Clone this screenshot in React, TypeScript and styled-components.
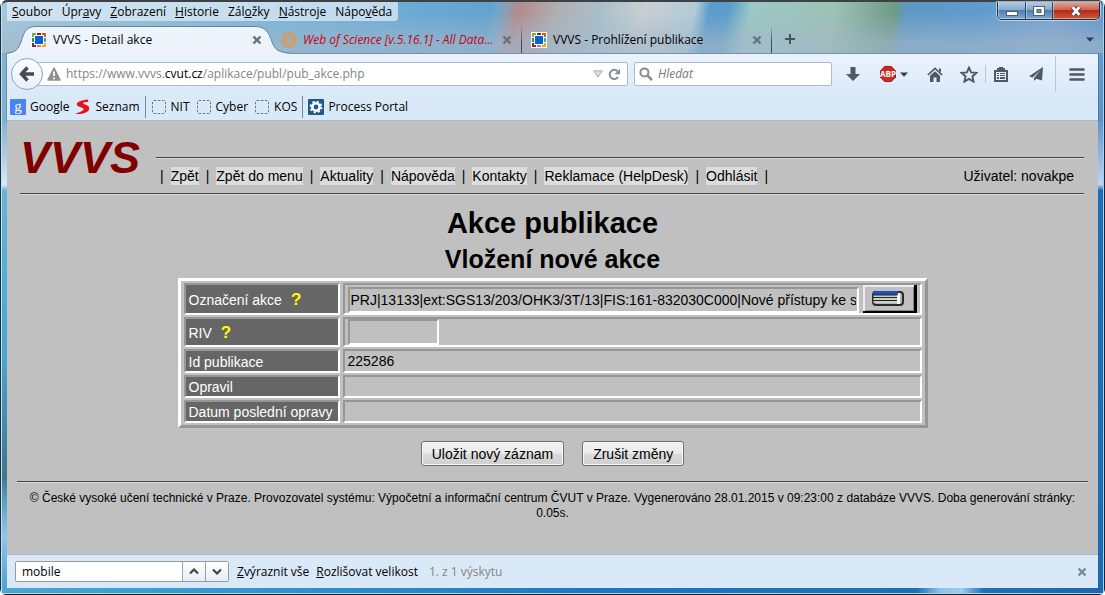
import React from "react";
import styled, { createGlobalStyle } from "styled-components";

const GlobalStyle = createGlobalStyle`
  *, *::before, *::after { box-sizing: border-box; }
  body { margin: 0; }
  button, input { margin: 0; padding: 0; border: 0; background: none; font: inherit; color: inherit; border-radius: 0; }
  svg { display: block; flex: none; }
`;

/* ---------- window ---------- */

const Frame = styled.div`
  position: relative;
  display: flex;
  flex-direction: column;
  min-height: 100vh;
  padding: 0 7px 7px;
  border-radius: 7px 7px 6px 6px;
  color: #000;
  font: 12px/16px "Open Sans", "Noto Sans", sans-serif;
  background:
    linear-gradient(to bottom, #3c4148 0 2px, transparent 2px),
    linear-gradient(to right, #14303f 0 1px, #c4e2f0 1px 2px, transparent 2px),
    linear-gradient(to left, #14263c 0 1px, #a9d0ee 1px 2px, transparent 2px),
    linear-gradient(to top, #15202c 0 1px, #a8d8ec 1px 2px, transparent 2px),
    linear-gradient(to right, #4ba6d4, #2a90cd 30%, #1f76bd 55%, #1d70b5 83%, #8ac0ea 85%, #9fcdf0 87%, #1f70b6 89%, #1d66ab) bottom / 100% 7px no-repeat,
    linear-gradient(to bottom, #86b6d4, #7fb0d0 20%, #aecbe6 26%, #dbe9f5 31%, #64b5dc 32%, #4ba5cf 60%, #41758f 80%, #5a9cc0 84%, #8fc7ec 90%, #4c9cca) left / 7px 100% no-repeat,
    linear-gradient(to bottom, #6fa0cd, #5b93c9 20%, #bed6ec 31%, #1a6db6 32%, #1c6cb2) right / 7px 100% no-repeat,
    #4b9bcb;
`;

const Glass = styled.header`
  display: flex;
  flex-direction: column;
  margin: 0 -5px;
  padding: 0 3px 0 5px;
  border-radius: 6px 6px 0 0;
  border-top: 2px solid #3c4148;
  background:
    linear-gradient(to bottom, rgba(160, 180, 200, 0) 10px, rgba(163, 183, 202, 0.65) 42px),
    linear-gradient(102deg, #a4c9de 0%, #8dc0dc 12%, #74b1d8 30%, #62a3d0 44%, #77a6c6 45%, #b28a8c 46.5%, #b0aeb0 50%, #a9c0cc 54%, #c8d0d2 58%, #b2cbd8 62.5%, #5a9ccb 63.8%, #5a9ccb 65.5%, #9bc8c4 67.5%, #9dc2b4 75%, #6d9a86 80.5%, #5e97c4 81.5%, #5f9bce 88%, #79a2cc 95%, #5d95c9 100%);
`;

const TitleRow = styled.div`
  display: flex;
  justify-content: space-between;
  align-items: flex-start;
  height: 23px;
`;

const MenuBar = styled.nav`
  display: flex;
  gap: 9px;
  height: 19px;
  padding: 0 6px 0 5px;
  border-radius: 0 0 4px 0;
  background: rgba(228, 238, 247, 0.7);
`;

const PlainButton = styled.button`
  line-height: 18px;
  white-space: nowrap;
`;

const WindowButtons = styled.div`
  display: flex;
  height: 18px;
  border: 1px solid #1f3146;
  border-top: 0;
  border-radius: 0 0 5px 5px;
  box-shadow: 0 0 0 1px rgba(230, 240, 250, 0.6);
  overflow: hidden;
`;

const WindowButton = styled.button<{ $width: number; $close?: boolean }>`
  display: grid;
  place-items: center;
  width: ${(p) => p.$width}px;
  border-right: ${(p) => (p.$close ? "0" : "1px solid #2b4560")};
  box-shadow: inset 1px -1px 0 rgba(255, 255, 255, 0.4);
  background: ${(p) =>
    p.$close
      ? "linear-gradient(#dfa79b, #cc6654 45%, #b32c17 50%, #cf5a38)"
      : "linear-gradient(#b4cde4, #84a9ce 45%, #4f7fb0 50%, #7fa8cf)"};
`;

/* ---------- tabs ---------- */

const TabRow = styled.div`
  display: flex;
  height: 28px;
  padding-left: 15px;
`;

const Tab = styled.div<{ $divided?: boolean }>`
  position: relative;
  display: flex;
  align-items: center;
  gap: 6px;
  width: 250px;
  padding: 2px 10px 0 9px;
  ${(p) =>
    p.$divided &&
    `background: linear-gradient(to bottom, transparent, #3d5060 60%) right / 1px 100% no-repeat;`}
`;

const TabShape = styled.svg`
  position: absolute;
  left: -15px;
  bottom: -1px;
`;

const TabTitle = styled.span<{ $unread?: boolean }>`
  position: relative;
  flex: 1;
  min-width: 0;
  overflow: hidden;
  white-space: nowrap;
  text-overflow: ellipsis;
  ${(p) => p.$unread && "color: #c8050f; font-style: italic;"}
`;

const OverShape = styled.span`
  position: relative;
  display: flex;
`;

const IconButton = styled.button`
  position: relative;
  display: grid;
  place-items: center;
  min-width: 10px;
`;

const NewTab = styled(IconButton)`
  width: 36px;
`;

const AllTabs = styled(IconButton)`
  width: 20px;
  margin-left: auto;
`;

/* ---------- toolbars ---------- */

const Toolbars = styled.div`
  border-top: 1px solid #6f93ad;
  border-bottom: 1px solid #a3b9d2;
  box-shadow: -1px 0 0 #6b8ea9, 1px 0 0 #4d7ba8;
  background: linear-gradient(#ebf3fd, #dae9f8 60%);
`;

const NavBar = styled.div`
  display: flex;
  align-items: center;
  height: 40px;
  padding-left: 4px;
`;

const BackButton = styled.button`
  position: relative;
  display: grid;
  place-items: center;
  width: 32px;
  height: 32px;
  border: 1px solid #8fa5ba;
  border-radius: 50%;
  background: linear-gradient(#fdfeff, #e9f0f8);
`;

const AddressBox = styled.div`
  display: flex;
  flex: 1;
  align-items: center;
  gap: 5px;
  height: 24px;
  margin-left: -10px;
  padding: 0 6px 0 13px;
  border: 1px solid #a7bccf;
  border-radius: 2px;
  background: #fff;
`;

const Address = styled.div`
  flex: 1;
  color: #858585;
  white-space: nowrap;
  b { font-weight: 400; color: #000; }
`;

const SearchBox = styled.label`
  display: flex;
  align-items: center;
  gap: 5px;
  width: 198px;
  height: 24px;
  margin: 0 4px 0 6px;
  padding: 0 4px;
  border: 1px solid #a7bccf;
  border-radius: 2px;
  background: #fff;
`;

const TextInput = styled.input`
  flex: 1;
  min-width: 0;
  outline: 0;
  &::placeholder { color: #777; font-style: italic; opacity: 1; }
`;

const ToolButton = styled.button<{ $width: number; $rule?: number }>`
  display: flex;
  align-items: center;
  justify-content: center;
  gap: 4px;
  width: ${(p) => p.$width}px;
  height: ${(p) => p.$rule ?? 24}px;
  border-right: ${(p) => (p.$rule ? "1px solid #b9c6d4" : "0")};
`;

const Bookmarks = styled.nav`
  display: flex;
  align-items: center;
  gap: 6px;
  height: 26px;
  padding-left: 3px;
`;

const Bookmark = styled.button`
  display: flex;
  align-items: center;
  gap: 4px;
  height: 22px;
`;

const Separator = styled.span`
  width: 1px;
  height: 22px;
  margin: 0 -1px;
  background: #7c8896;
`;

/* ---------- page ---------- */

const Page = styled.main`
  flex: 1;
  padding: 20px 10px 12px;
  background: #c0c0c0;
  font: 14px/16px "Liberation Sans", Arial, sans-serif;
`;

const PageHeader = styled.div`
  display: flex;
  align-items: flex-start;
  height: 53px;
  margin: 0 4px 0 3px;
  border-bottom: 1px solid #444;
  box-shadow: 0 1px 0 #d8d8d8;
`;

const Logo = styled.div`
  width: 136px;
  color: #800000;
  font-size: 45px;
  line-height: 34px;
  font-style: italic;
  font-weight: 700;
`;

const HeaderBar = styled.div`
  display: flex;
  flex: 1;
  align-items: center;
  justify-content: space-between;
  margin-top: 16px;
  padding: 9px 10px 0 4px;
  border-top: 1px solid #444;
  box-shadow: inset 0 1px 0 #d8d8d8;
`;

const Links = styled.nav`
  display: flex;
  align-items: center;
  gap: 7px;
  line-height: 18px;
  white-space: nowrap;
  a { color: #000; background: #dcdcdc; text-decoration: none; }
`;

const Title = styled.h1`
  margin: 11px 0 0;
  font-size: 29px;
  line-height: 36px;
  text-align: center;
`;

const Subtitle = styled.h2`
  margin: 0 0 1px;
  font-size: 25px;
  line-height: 36px;
  text-align: center;
`;

const FormTable = styled.table`
  width: 750px;
  margin: 0 auto;
  border: 3px solid;
  border-color: #fff #969696 #969696 #fff;
  border-spacing: 3px 2px;
  border-collapse: separate;
`;

const FormRow = styled.tr<{ $height: number }>`
  height: ${(p) => p.$height}px;
`;

const bevel = `
  border: 2px solid;
  border-color: #969696 #fff #fff #969696;
`;

const LabelCell = styled.th`
  width: 156px;
  padding: 1px 3px 0;
  ${bevel}
  background: #666;
  color: #fff;
  font-weight: 400;
  text-align: left;
  white-space: nowrap;
`;

const ValueCell = styled.td`
  padding: 0 3px;
  ${bevel}
`;

const Help = styled.button`
  margin-left: 9px;
  color: #ff0;
  font-size: 17px;
  font-weight: 700;
  line-height: 18px;
`;

const FieldLine = styled.div`
  display: flex;
  align-items: flex-end;
  gap: 4px;
`;

const Field = styled.input<{ $width?: number }>`
  display: block;
  ${(p) => (p.$width ? `width: ${p.$width}px;` : "flex: 1; min-width: 0;")}
  height: 26px;
  padding: 0 1px;
  ${bevel}
`;

const ListButton = styled.button`
  display: grid;
  place-items: center;
  width: 54px;
  height: 28px;
  border: solid #000;
  border-width: 0 3px 2px 0;
  box-shadow: inset 2px 2px 0 #ececec, inset -1px -1px 0 #888;
`;

const Actions = styled.div`
  display: flex;
  justify-content: center;
  gap: 18px;
  padding: 13px 0 15px;
`;

const ActionButton = styled.button`
  height: 25px;
  padding: 0 10px;
  border: 1px solid #707070;
  border-radius: 3px;
  box-shadow: inset 0 0 0 1px #f8f8f8;
  background: linear-gradient(#f2f2f2, #ebebeb 48%, #dadada 52%, #cfcfcf);
`;

const Footer = styled.footer`
  padding: 9px 12px 0;
  border-top: 1px solid #444;
  box-shadow: inset 0 1px 0 #d8d8d8;
  font-size: 12px;
  line-height: 15px;
  text-align: center;
`;

/* ---------- find bar ---------- */

const FindBar = styled.div`
  display: flex;
  align-items: center;
  height: 34px;
  padding: 0 11px 0 8px;
  border-top: 1px solid #a9b8cc;
  background: #dae9f8;
`;

const FindGroup = styled.div`
  display: flex;
  width: 214px;
  height: 21px;
  margin-right: 8px;
  border: 1px solid #999;
  border-radius: 2px;
  background: #fff;
`;

const FindInput = styled(TextInput)`
  padding-left: 6px;
`;

const FindStep = styled.button`
  display: grid;
  place-items: center;
  width: 23px;
  border-left: 1px solid #a0a0a0;
  background: linear-gradient(#fff, #e6eef7);
`;

const FindOption = styled(PlainButton)`
  margin-right: 7px;
`;

const FindStatus = styled.span`
  margin: 0 auto 0 4px;
  color: #858585;
`;

/* ---------- icons ---------- */

const INK = "#4c5966";

const SiteIcon = () => (
  <svg width="16" height="16" viewBox="0 0 16 16" shapeRendering="crispEdges">
    <rect width="16" height="16" fill="#fff" />
    <rect x="4" y="4" width="8" height="8" fill="#0066cc" />
    <path d="M1 5V1h4v2H3v2z" fill="#8aa53a" />
    <path d="M6 1h4v2H6z" fill="#a01515" />
    <path d="M11 1h4v4h-2V3h-2z" fill="#e8501e" />
    <path d="M1 6h2v4H1z" fill="#1b8f8f" />
    <path d="M13 6h2v4h-2z" fill="#28a8b8" />
    <path d="M1 11h2v2h2v2H1z" fill="#6b2f45" />
    <path d="M6 13h4v2H6z" fill="#e868b0" />
    <path d="M13 11h2v4h-4v-2h2z" fill="#f5a818" />
  </svg>
);

const ScienceIcon = () => (
  <svg width="16" height="16" viewBox="0 0 16 16" fill="none" stroke="#f0902c">
    <circle cx="8" cy="8" r="7.2" strokeWidth="1.5" strokeDasharray="1.5 .7" />
    <circle cx="8" cy="8" r="5" strokeWidth="1.4" strokeDasharray="2 .6" />
    <circle cx="8" cy="8" r="3" strokeWidth="1.2" strokeDasharray="1.6 .4" />
  </svg>
);

const Cross = ({ color = "#66727e" }: { color?: string }) => (
  <svg width="10" height="10" viewBox="0 0 10 10">
    <path d="M1.5 1.5l7 7M8.500 1.500l-7 7" stroke={color} strokeWidth="2.4" />
  </svg>
);

const Caret = () => (
  <svg width="8" height="5" viewBox="0 0 8 5">
    <path d="M0 .5h8L4 4.8z" fill="#333c46" />
  </svg>
);

const DashedIcon = () => (
  <svg width="16" height="16" viewBox="0 0 16 16">
    <rect x="1.5" y="1.5" width="13" height="13" rx="1.5" fill="none" stroke="#6f7780" strokeDasharray="2.5 1.5" />
  </svg>
);

const Chevron = ({ down }: { down?: boolean }) => (
  <svg width="10" height="7" viewBox="0 0 10 7">
    <path d={down ? "M1 1.5l4 4 4-4" : "M1 5.5l4-4 4 4"} fill="none" stroke="#3c4651" strokeWidth="2.2" />
  </svg>
);

const menus: [string, string, string][] = [
  ["", "S", "oubor"],
  ["Úpr", "a", "vy"],
  ["", "Z", "obrazení"],
  ["", "H", "istorie"],
  ["Zál", "o", "žky"],
  ["", "N", "ástroje"],
  ["Nápo", "v", "ěda"],
];

const links = ["Zpět", "Zpět do menu", "Aktuality", "Nápověda", "Kontakty", "Reklamace (HelpDesk)", "Odhlásit"];

export default function App() {
  return (
    <>
      <GlobalStyle />
      <Frame>
        <Glass>
          <TitleRow>
            <MenuBar>
              {menus.map(([before, key, after]) => (
                <PlainButton key={before + key + after}>
                  {before}
                  <u>{key}</u>
                  {after}
                </PlainButton>
              ))}
            </MenuBar>
            <WindowButtons>
              <WindowButton $width={28} aria-label="Minimalizovat">
                <svg width="14" height="14" viewBox="0 0 14 14">
                  <rect x="1.5" y="7.5" width="11" height="4" fill="#fff" stroke="#50606f" />
                </svg>
              </WindowButton>
              <WindowButton $width={27} aria-label="Maximalizovat">
                <svg width="14" height="12" viewBox="0 0 14 12">
                  <rect x="1.5" y="1.5" width="11" height="9" fill="#fff" stroke="#50606f" />
                  <rect x="5" y="4.5" width="4" height="3" fill="#6f97c0" stroke="#50606f" />
                </svg>
              </WindowButton>
              <WindowButton $width={46} $close aria-label="Zavřít okno">
                <svg width="14" height="12" viewBox="0 0 14 12">
                  <path d="M3.5 2l7 8M10.5 2l-7 8" stroke="#5a4a50" strokeWidth="4.4" />
                  <path d="M3.7 2.2l6.6 7.6M10.3 2.2L3.7 9.8" stroke="#fff" strokeWidth="2.6" />
                </svg>
              </WindowButton>
            </WindowButtons>
          </TitleRow>
          <TabRow>
            <Tab>
              <TabShape width="285" height="29" viewBox="0 0 285 29">
                <path
                  d="M0 28.5C8 28 11 25 14 17C17 8 18 1.5 29 1.5H248C259 1.5 262 8 265 17C268 25 272 28 283 28.5V29H0z"
                  fill="#edf4fc"
                />
                <path
                  d="M0 28C8 27.500 11 25 14 17C17 8 18 1.500 29 1.500H248C259 1.500 262 8 265 17C268 25 272 27.500 283 28"
                  fill="none"
                  stroke="#68839a"
                />
              </TabShape>
              <OverShape><SiteIcon /></OverShape>
              <TabTitle>VVVS - Detail akce</TabTitle>
              <IconButton aria-label="Zavřít panel"><Cross /></IconButton>
            </Tab>
            <Tab $divided>
              <ScienceIcon />
              <TabTitle $unread>Web of Science [v.5.16.1] - All Data...</TabTitle>
              <IconButton aria-label="Zavřít panel"><Cross /></IconButton>
            </Tab>
            <Tab $divided>
              <SiteIcon />
              <TabTitle>VVVS - Prohlížení publikace</TabTitle>
              <IconButton aria-label="Zavřít panel"><Cross /></IconButton>
            </Tab>
            <NewTab aria-label="Nový panel">
              <svg width="12" height="12" viewBox="0 0 12 12">
                <path d="M6 1v10M1 6h10" stroke="#45525f" strokeWidth="2" />
              </svg>
            </NewTab>
            <AllTabs aria-label="Všechny panely"><Caret /></AllTabs>
          </TabRow>
        </Glass>

        <Toolbars>
          <NavBar>
            <BackButton aria-label="Zpět o stránku">
              <svg width="16" height="16" viewBox="0 0 16 16">
                <path d="M8.500 1.500L2.500 8l6 6.500M3 8h12" fill="none" stroke="#434c56" strokeWidth="3.400" />
              </svg>
            </BackButton>
            <AddressBox>
              <svg width="14" height="14" viewBox="0 0 14 14">
                <path d="M7 1.200L13 13H1z" fill="#919191" stroke="#919191" strokeWidth="1.600" strokeLinejoin="round" />
                <path d="M7 4.500V9M7 10.400v1.900" stroke="#fff" strokeWidth="1.800" />
              </svg>
              <Address>
                https://www.vvvs.<b>cvut.cz</b>/aplikace/publ/pub_akce.php
              </Address>
              <svg width="10" height="8" viewBox="0 0 10 8">
                <path d="M.8.8h8.400L5 7z" fill="#d8dee4" stroke="#a4aeb8" />
              </svg>
              <IconButton aria-label="Obnovit">
                <svg width="13" height="13" viewBox="0 0 13 13">
                  <path d="M10 9.200A4.600 4.600 0 1 1 9.600 3.200" fill="none" stroke="#7f8fa0" strokeWidth="2" />
                  <path d="M12 .8v5.400H6.600z" fill="#7f8fa0" />
                </svg>
              </IconButton>
            </AddressBox>
            <SearchBox>
              <svg width="14" height="14" viewBox="0 0 14 14" fill="none" stroke="#8c8c8c">
                <circle cx="5.400" cy="5.400" r="4" strokeWidth="2" />
                <path d="M8.300 8.300L13 13" strokeWidth="2.600" />
              </svg>
              <TextInput placeholder="Hledat" aria-label="Hledat" />
            </SearchBox>
            <ToolButton $width={34} aria-label="Stahování">
              <svg width="14" height="14" viewBox="0 0 14 14">
                <path d="M4.500 0h5v7H14l-7 7-7-7h4.500z" fill={INK} />
              </svg>
            </ToolButton>
            <ToolButton $width={48} aria-label="Adblock Plus">
              <svg width="16" height="16" viewBox="0 0 16 16">
                <path d="M4.700 0h6.600L16 4.700v6.600L11.300 16H4.700L0 11.300V4.700z" fill="#9d2018" />
                <path d="M5.100 1h5.800L15 5.100v5.800L10.900 15H5.100L1 10.900V5.100z" fill="#cf2a1e" />
                <text x="8" y="11" textAnchor="middle" fontSize="8" fontWeight="700" fill="#fff" fontFamily="Open Sans, sans-serif">ABP</text>
              </svg>
              <Caret />
            </ToolButton>
            <ToolButton $width={34} aria-label="Domů">
              <svg width="16" height="15" viewBox="0 0 16 15">
                <path d="M.8 8L8 1.300 15.200 8" fill="none" stroke={INK} strokeWidth="1.700" />
                <path d="M12 1.500h2v4l-2-2z" fill={INK} />
                <path d="M3 8.800l5-4.600 5 4.600V15H9.500v-4.500h-3V15H3z" fill={INK} />
              </svg>
            </ToolButton>
            <ToolButton $width={34} $rule={18} aria-label="Přidat do záložek">
              <svg width="18" height="17" viewBox="0 0 16 16">
                <path
                  d="M8 1.500l2 4.500 4.900.5-3.700 3.300 1.100 4.900L8 12.200l-4.300 2.500 1.100-4.900L1.100 6.500 6 6z"
                  fill="none"
                  stroke={INK}
                  strokeWidth="1.800"
                />
              </svg>
            </ToolButton>
            <ToolButton $width={30} aria-label="Záložky">
              <svg width="14" height="15" viewBox="0 0 14 15" shapeRendering="crispEdges" fill={INK}>
                <path d="M0 3h3V1h2V0h4v1h2v2h3v12H0zM2 5v8h10V5z" fillRule="evenodd" />
                <path d="M3 6h2v1H3zM6 6h5v1H6zM3 8h2v1H3zM6 8h5v1H6zM3 10h2v2H3zM6 10h5v2H6z" />
              </svg>
            </ToolButton>
            <ToolButton $width={40} $rule={36} aria-label="Sdílet">
              <svg width="14" height="14" viewBox="0 0 14 14" fill={INK}>
                <path d="M14 0L0 9.200l3.600 1.300L11.500 3 5 11v3l2.300-2.300L13 13.500z" />
              </svg>
            </ToolButton>
            <ToolButton $width={42} aria-label="Nabídka">
              <svg width="16" height="13" viewBox="0 0 16 13">
                <path d="M1.500 1.500h13M1.500 6.500h13M1.500 11.500h13" stroke={INK} strokeWidth="2.600" strokeLinecap="round" />
              </svg>
            </ToolButton>
          </NavBar>
          <Bookmarks>
            <Bookmark>
              <svg width="16" height="16" viewBox="0 0 16 16">
                <rect width="16" height="16" rx="1" fill="#4a84ee" />
                <text x="8" y="11.500" textAnchor="middle" fontSize="15" fill="#fff" fontFamily="Liberation Serif">g</text>
              </svg>
              Google
            </Bookmark>
            <Bookmark>
              <svg width="16" height="16" viewBox="0 0 16 16">
                <path d="M13 .5C8 .8 2 2.500 1.800 5.200c-.2 2.800 6.400 2.800 6.800 4.800.2 1.800-4 3.200-8.600 5 7 .6 14.500-1.600 14.300-5.800C14.100 5.800 8.500 5.800 8.100 4.300 8 3.300 10.500 3 13.400 2.800z" fill="#e8101a" />
              </svg>
              Seznam
            </Bookmark>
            <Separator />
            <Bookmark><DashedIcon />NIT</Bookmark>
            <Bookmark><DashedIcon />Cyber</Bookmark>
            <Bookmark><DashedIcon />KOS</Bookmark>
            <Separator />
            <Bookmark>
              <svg width="16" height="16" viewBox="0 0 16 16">
                <rect width="16" height="16" rx="1" fill="#1c5a8c" />
                <circle cx="8" cy="8" r="3.700" fill="none" stroke="#fff" strokeWidth="2.600" />
                <circle cx="8" cy="8" r="5.500" fill="none" stroke="#fff" strokeWidth="1.800" strokeDasharray="2.160 2.160" />
              </svg>
              Process Portal
            </Bookmark>
          </Bookmarks>
        </Toolbars>

        <Page>
          <PageHeader>
            <Logo>VVVS</Logo>
            <HeaderBar>
              <Links>
                <span>|</span>
                {links.map((label) => (
                  <React.Fragment key={label}>
                    <a href="#">{label}</a>
                    <span>|</span>
                  </React.Fragment>
                ))}
              </Links>
              <div>Uživatel: novakpe</div>
            </HeaderBar>
          </PageHeader>
          <Title>Akce publikace</Title>
          <Subtitle>Vložení nové akce</Subtitle>
          <FormTable>
            <tbody>
              <FormRow $height={32}>
                <LabelCell scope="row">
                  <label htmlFor="akce">Označení akce</label>
                  <Help aria-label="Nápověda k označení akce">?</Help>
                </LabelCell>
                <ValueCell>
                  <FieldLine>
                    <Field
                      id="akce"
                      defaultValue="PRJ|13133|ext:SGS13/203/OHK3/3T/13|FIS:161-832030C000|Nové přístupy ke s"
                    />
                    <ListButton aria-label="Seznam akcí">
                      <svg width="32" height="15" viewBox="0 0 32 15">
                        <rect x="1" y="1" width="30" height="13" rx="3" fill="#b4b4b4" stroke="#2a2a2a" strokeWidth="2" />
                        <path d="M25 2h3v11h-3z" fill="#fff" />
                        <path d="M1 0h25v4H1z" fill="#1c50b8" />
                        <path d="M1 5h24M1 8h24M1 11h24" stroke="#e8e8d8" />
                        <path d="M1 4h24M1 6.500h24M1 9.500h24" stroke="#222" />
                      </svg>
                    </ListButton>
                  </FieldLine>
                </ValueCell>
              </FormRow>
              <FormRow $height={30}>
                <LabelCell scope="row">
                  <label htmlFor="riv">RIV</label>
                  <Help aria-label="Nápověda k RIV">?</Help>
                </LabelCell>
                <ValueCell><Field id="riv" $width={91} /></ValueCell>
              </FormRow>
              <FormRow $height={24}>
                <LabelCell scope="row">Id publikace</LabelCell>
                <ValueCell>225286</ValueCell>
              </FormRow>
              <FormRow $height={23}>
                <LabelCell scope="row">Opravil</LabelCell>
                <ValueCell />
              </FormRow>
              <FormRow $height={23}>
                <LabelCell scope="row">Datum poslední opravy</LabelCell>
                <ValueCell />
              </FormRow>
            </tbody>
          </FormTable>
          <Actions>
            <ActionButton>Uložit nový záznam</ActionButton>
            <ActionButton>Zrušit změny</ActionButton>
          </Actions>
          <Footer>
            © České vysoké učení technické v Praze. Provozovatel systému: Výpočetní a informační centrum ČVUT v Praze.
            Vygenerováno 28.01.2015 v 09:23:00 z databáze VVVS. Doba generování stránky: 0.05s.
          </Footer>
        </Page>

        <FindBar>
          <FindGroup>
            <FindInput defaultValue="mobile" aria-label="Najít na stránce" />
            <FindStep aria-label="Předchozí"><Chevron /></FindStep>
            <FindStep aria-label="Další"><Chevron down /></FindStep>
          </FindGroup>
          <FindOption><u>Z</u>výraznit vše</FindOption>
          <FindOption><u>R</u>ozlišovat velikost</FindOption>
          <FindStatus>1. z 1 výskytu</FindStatus>
          <IconButton aria-label="Zavřít hledání"><Cross color="#7b8896" /></IconButton>
        </FindBar>
      </Frame>
    </>
  );
}
